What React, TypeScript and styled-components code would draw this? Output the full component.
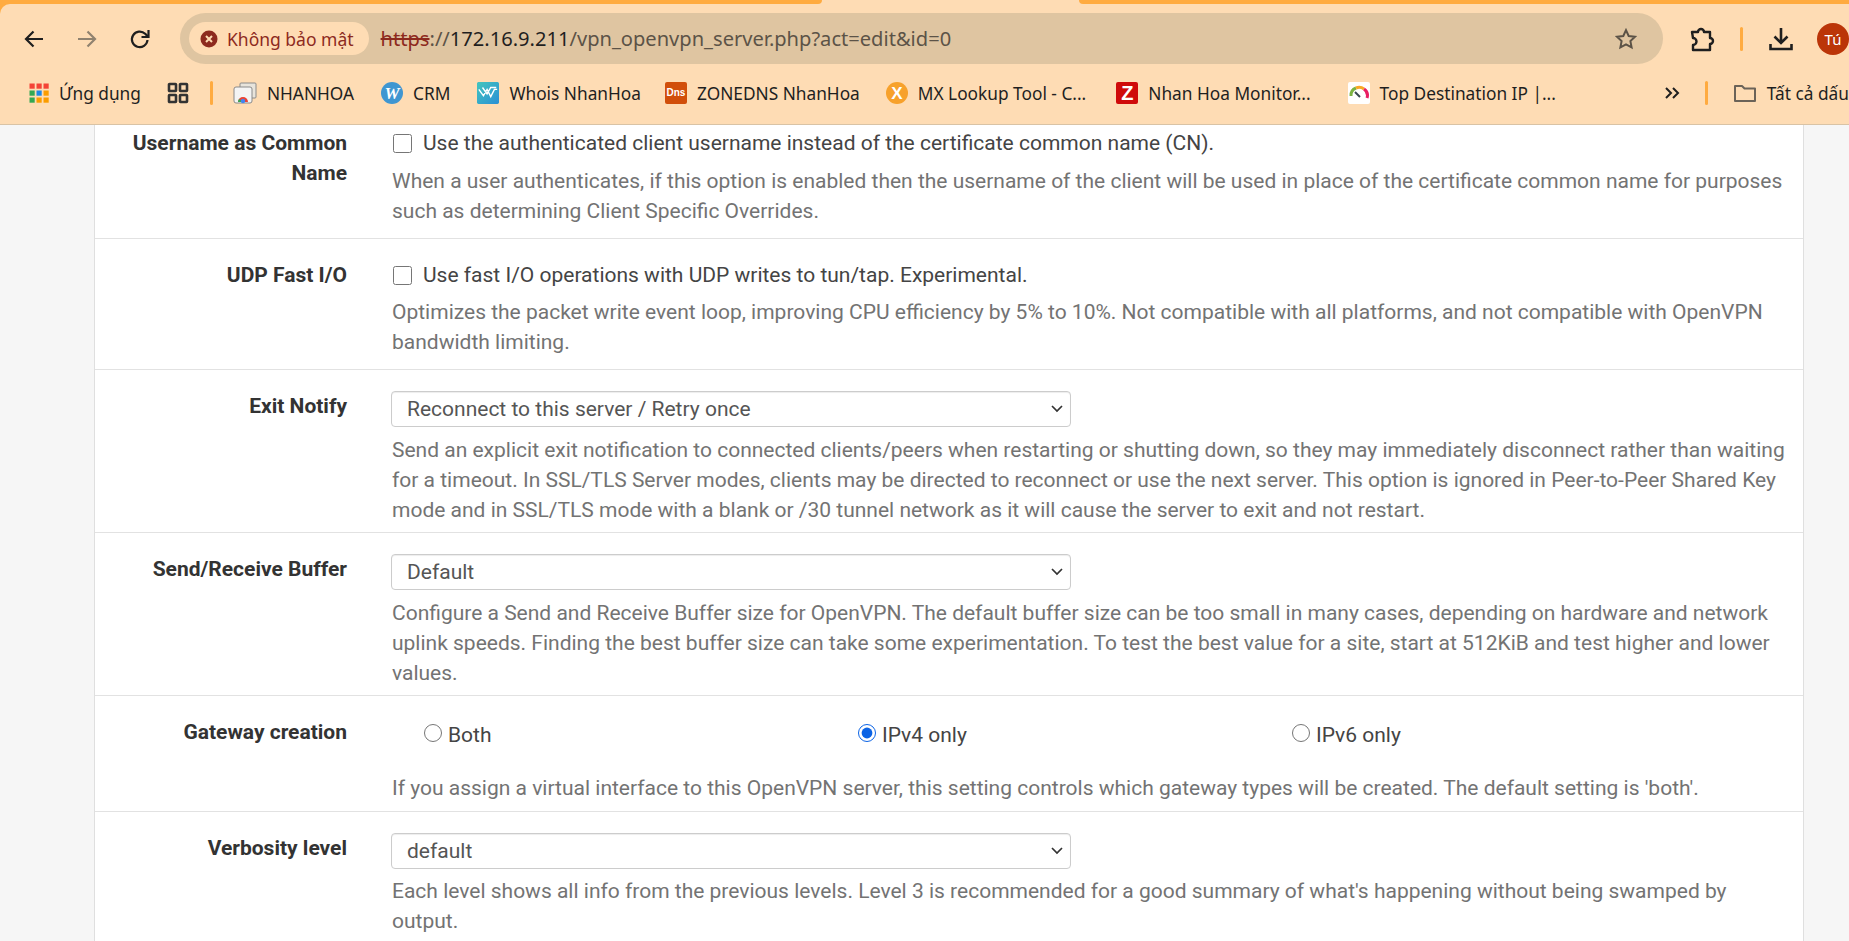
import React from 'react';
import styled, { createGlobalStyle } from 'styled-components';

const GlobalStyle = createGlobalStyle`
  html, body {
    margin: 0;
    padding: 0;
    height: 941px;
    overflow: hidden;
    background: #f6f6f6;
  }
  * { box-sizing: border-box; }
`;

const Window = styled.div`
  width: 1849px;
  height: 941px;
  display: flex;
  flex-direction: column;
  overflow: hidden;
  background: #ffab40;
`;

const TabStrip = styled.div`
  height: 4px;
  width: 100%;
  flex: none;
  display: flex;
  background: #fedcb4;
`;

const TabEdge = styled.div<{ $w?: number; $corner: string }>`
  background: #ffab40;
  height: 4px;
  ${({ $w }) => ($w ? `width: ${$w}px;` : 'flex: 1;')}
  border-${({ $corner }) => $corner}-radius: 4px;
`;

const TabGap = styled.div`
  width: 257px;
`;

const Chrome = styled.header`
  flex: none;
  height: 121px;
  background: #fedcb4;
  border-bottom: 1px solid #d9c3a5;
  border-top-left-radius: 10px;
  font-family: 'Noto Sans', 'Open Sans', sans-serif;
  overflow: hidden;
`;

const Toolbar = styled.div`
  height: 51px;
  margin-top: 9px;
  display: flex;
  align-items: center;
  padding-left: 21px;
`;

const NavButton = styled.button<{ $faded?: boolean }>`
  width: 26px;
  height: 26px;
  padding: 0;
  margin-right: 27px;
  border: 0;
  background: none;
  display: flex;
  align-items: center;
  justify-content: center;
  color: ${({ $faded }) => ($faded ? '#90826f' : '#1f1f1f')};
`;

const AddressBar = styled.div`
  width: 1483px;
  height: 51px;
  border-radius: 26px;
  background: #dfc5a1;
  display: flex;
  align-items: center;
  padding: 0 25px 0 9px;
`;

const SecurityChip = styled.div`
  height: 33px;
  padding: 0 15px 0 11px;
  border-radius: 17px;
  background: #fedcb4;
  color: #8d2a1e;
  display: flex;
  align-items: center;
  gap: 9px;
  font-size: 17.5px;
  white-space: nowrap;
`;

const Url = styled.div`
  margin-left: 12px;
  flex: 1;
  font-size: 20.1px;
  color: #5c5347;
  white-space: nowrap;
`;

const Scheme = styled.span`
  color: #8d2a1e;
  text-decoration: line-through;
`;

const Host = styled.span`
  color: #1f1f1f;
`;

const ToolIcons = styled.div`
  display: flex;
  align-items: center;
  flex: none;
`;

const ToolIcon = styled.div<{ $ml: number }>`
  margin-left: ${({ $ml }) => $ml}px;
  display: flex;
  color: #1f1f1f;
`;

const OrangeRule = styled.div<{ $ml: number }>`
  width: 3px;
  height: 24px;
  border-radius: 2px;
  background: #ffab40;
  flex: none;
  margin-left: ${({ $ml }) => $ml}px;
`;

const Avatar = styled.div`
  width: 32px;
  height: 32px;
  margin-left: 22px;
  flex: none;
  border-radius: 50%;
  background: #bb3508;
  color: #fff;
  font-size: 15px;
  display: flex;
  align-items: center;
  justify-content: center;
`;

const BookmarkBar = styled.div`
  height: 34px;
  margin-top: 12px;
  display: flex;
  align-items: center;
  padding-left: 28px;
  white-space: nowrap;
`;

const Bookmark = styled.div<{ $ml: number }>`
  display: flex;
  align-items: center;
  gap: 10px;
  margin-left: ${({ $ml }) => $ml}px;
  font-size: 17.3px;
  color: #1f1f1f;
`;

const Favicon = styled.div<{ $bg: string; $round?: boolean }>`
  width: 22px;
  height: 22px;
  flex: none;
  background: ${({ $bg }) => $bg};
  border-radius: ${({ $round }) => ($round ? '50%' : '2px')};
  color: #fff;
  display: flex;
  align-items: center;
  justify-content: center;
  font-weight: 700;
  overflow: hidden;
`;

const FaviconLetter = styled.span<{ $size: number; $serif?: boolean }>`
  font-size: ${({ $size }) => $size}px;
  line-height: 1;
  font-style: ${({ $serif }) => ($serif ? 'italic' : 'normal')};
  font-family: ${({ $serif }) => ($serif ? "'Liberation Serif', serif" : "'Liberation Sans', sans-serif")};
`;

const Page = styled.main`
  flex: 1;
  padding: 0 45px 0 94px;
  min-height: 0;
  background: #f6f6f6;
`;

const Panel = styled.section`
  background: #fff;
  border-left: 1px solid #dfdfdf;
  border-right: 1px solid #dfdfdf;
  font-family: Roboto, 'Liberation Sans', sans-serif;
  font-size: 21px;
  line-height: 30px;
`;

const Row = styled.div<{ $top?: number; $bottom?: number }>`
  display: grid;
  grid-template-columns: 252px 1fr;
  column-gap: 45px;
  padding: ${({ $top }) => $top ?? 21}px 17px ${({ $bottom }) => $bottom ?? 8}px 0;
  border-bottom: 1px solid #e2e2e2;
`;

const Label = styled.div`
  text-align: right;
  font-weight: 700;
  color: #333;
`;

const Field = styled.div`
  min-width: 0;
`;

const CheckLine = styled.label<{ $gap?: number }>`
  display: flex;
  align-items: center;
  gap: 11px;
  color: #444;
  margin-bottom: ${({ $gap }) => $gap ?? 7}px;
`;

const CheckBox = styled.input`
  width: 19px;
  height: 19px;
  margin: 1px 0 0 1px;
  flex: none;
`;

const Help = styled.p`
  margin: 0;
  color: #737373;
`;

const SelectBox = styled.select<{ $gap?: number }>`
  display: block;
  width: 680px;
  height: 36px;
  margin: 0 0 ${({ $gap }) => $gap ?? 7}px -1px;
  padding: 0 15px;
  appearance: none;
  border: 1px solid #ccc;
  border-radius: 4px;
  background: #fff url("data:image/svg+xml,%3Csvg xmlns='http://www.w3.org/2000/svg' width='12' height='8'%3E%3Cpath d='M1 1l5 5 5-5' fill='none' stroke='%23333' stroke-width='1.7'/%3E%3C/svg%3E") no-repeat right 7px center;
  box-shadow: inset 0 1px 1px rgba(0, 0, 0, 0.075);
  font: inherit;
  line-height: 34px;
  color: #555;
`;

const RadioGrid = styled.div`
  display: grid;
  grid-template-columns: repeat(3, 434px);
  padding-left: 32px;
  margin: 3px 0 23px;
`;

const RadioLine = styled.label`
  display: flex;
  align-items: center;
  gap: 6px;
  color: #444;
`;

const RadioDot = styled.input`
  width: 18px;
  height: 18px;
  margin: -5px 0 0 0;
  flex: none;
  accent-color: #0b63e5;
`;

const BackArrow = () => (
  <svg width="24" height="24" viewBox="0 0 24 24" fill="none" stroke="currentColor" strokeWidth="2.2">
    <path d="M21 12H4M11.5 4.5 4 12l7.5 7.5" />
  </svg>
);

const ForwardArrow = () => (
  <svg width="24" height="24" viewBox="0 0 24 24" fill="none" stroke="currentColor" strokeWidth="2.2">
    <path d="M3 12h17M12.5 4.5 20 12l-7.5 7.5" />
  </svg>
);

const ReloadIcon = () => (
  <svg width="24" height="24" viewBox="0 0 24 24" fill="none" stroke="currentColor" strokeWidth="2.2">
    <path d="M19.5 13a7.8 7.8 0 1 1-2.3-6.2l2.6 2.6" />
    <path d="M20.5 3v7h-7" />
  </svg>
);

const ErrorBadge = () => (
  <svg width="18" height="18" viewBox="0 0 18 18">
    <circle cx="9" cy="9" r="8.5" fill="#8d2a1e" />
    <path d="M6 6l6 6M12 6l-6 6" stroke="#fedcb4" strokeWidth="2" />
  </svg>
);

const StarIcon = () => (
  <svg width="24" height="24" viewBox="0 0 24 24" fill="none" stroke="#5c5347" strokeWidth="2">
    <path d="M12 3.2l2.7 5.8 6.3.8-4.6 4.3 1.2 6.3-5.6-3.1-5.6 3.1 1.2-6.3L3 9.8l6.3-.8z" />
  </svg>
);

const PuzzleIcon = () => (
  <svg width="28" height="28" viewBox="0 0 28 28" fill="none" stroke="currentColor" strokeWidth="2.4" strokeLinejoin="round">
    <path d="M4 7h6a3 3 0 0 1 6 0h6v6a3 3 0 0 1 0 6v6H5v-5a3.5 3.5 0 0 0 0-7z" />
  </svg>
);

const DownloadIcon = () => (
  <svg width="28" height="28" viewBox="0 0 28 28" fill="none" stroke="currentColor" strokeWidth="2.6">
    <path d="M14 3v15M7.5 11.5 14 18l6.5-6.5M3.5 19v5h21v-5" />
  </svg>
);

const AppsIcon = () => (
  <svg width="20" height="20" viewBox="0 0 20 20">
    {['#f44336', '#f44336', '#f44336', '#34a853', '#1e88e5', '#fb9d00', '#34a853', '#fb9d00', '#fb9d00'].map((c, i) => (
      <rect key={i} x={0.5 + (i % 3) * 7} y={0.5 + Math.floor(i / 3) * 7} width="5.2" height="5.2" fill={c} />
    ))}
  </svg>
);

const GridIcon = () => (
  <svg width="24" height="24" viewBox="0 0 24 24" fill="none" stroke="#333" strokeWidth="2.6">
    <rect x="3" y="3" width="7" height="7" rx="0.5" />
    <rect x="14" y="3" width="7" height="7" rx="0.5" />
    <rect x="3" y="14" width="7" height="7" rx="0.5" />
    <rect x="14" y="14" width="7" height="7" rx="0.5" />
  </svg>
);

const WindowsIcon = () => (
  <svg width="24" height="24" viewBox="0 0 24 24">
    <rect x="7" y="2" width="16" height="15" rx="1" fill="#e8e4dc" stroke="#8a8a8a" />
    <rect x="1" y="6" width="18" height="16" rx="2" fill="#f4f4f4" stroke="#8a8a8a" />
    <path d="M5 21a5 5 0 0 1 10 0z" fill="#ea4335" />
    <path d="M10 21l-5 0a5 5 0 0 1 1-3z" fill="#34a853" />
    <circle cx="10" cy="20" r="2.2" fill="#4285f4" />
  </svg>
);

const WhoisIcon = () => (
  <svg width="24" height="24" viewBox="0 0 24 24" fill="none" stroke="#fff" strokeWidth="1.5">
    <defs>
      <linearGradient id="whoisFill" x1="0" y1="0" x2="1" y2="1">
        <stop offset="0" stopColor="#43c6bd" />
        <stop offset="1" stopColor="#2a8fd6" />
      </linearGradient>
    </defs>
    <rect width="24" height="24" rx="2" fill="url(#whoisFill)" stroke="none" />
    <path d="M2 8l5 7 4-7 4 8 4-8h3M6 6l5 7 4-7h6" />
  </svg>
);

const GaugeIcon = () => (
  <svg width="22" height="22" viewBox="0 0 22 22" fill="none">
    <path d="M3 14a8 8 0 0 1 5-8" stroke="#7cb342" strokeWidth="3" />
    <path d="M8 6a8 8 0 0 1 8 1" stroke="#f9a825" strokeWidth="3" />
    <path d="M16 7a8 8 0 0 1 3 9" stroke="#e91e63" strokeWidth="3" />
    <path d="M7 10l5 5" stroke="#37474f" strokeWidth="2" />
  </svg>
);

const FolderIcon = () => (
  <svg width="24" height="24" viewBox="0 0 24 24" fill="none" stroke="#6b6358" strokeWidth="2">
    <path d="M2 5h7l2.5 2.5H22V20H2z" strokeLinejoin="round" />
  </svg>
);

const ChevronsIcon = () => (
  <svg width="16" height="16" viewBox="0 0 16 16" fill="none" stroke="#1f1f1f" strokeWidth="2">
    <path d="M2 3l5 5-5 5M9 3l5 5-5 5" />
  </svg>
);

export default function App() {
  return (
    <Window>
      <GlobalStyle />
      <TabStrip>
        <TabEdge $w={822} $corner="bottom-right" />
        <TabGap />
        <TabEdge $corner="bottom-left" />
      </TabStrip>
      <Chrome>
        <Toolbar>
          <NavButton aria-label="Back"><BackArrow /></NavButton>
          <NavButton $faded aria-label="Forward"><ForwardArrow /></NavButton>
          <NavButton aria-label="Reload"><ReloadIcon /></NavButton>
          <AddressBar>
            <SecurityChip><ErrorBadge />Không bảo mật</SecurityChip>
            <Url>
              <Scheme>https</Scheme>://<Host>172.16.9.211</Host>/vpn_openvpn_server.php?act=edit&amp;id=0
            </Url>
            <StarIcon />
          </AddressBar>
          <ToolIcons>
            <ToolIcon $ml={25}><PuzzleIcon /></ToolIcon>
            <OrangeRule $ml={24} />
            <ToolIcon $ml={24}><DownloadIcon /></ToolIcon>
            <Avatar>Tú</Avatar>
          </ToolIcons>
        </Toolbar>
        <BookmarkBar>
          <Bookmark $ml={1}><AppsIcon />Ứng dụng</Bookmark>
          <Bookmark $ml={25}><GridIcon /></Bookmark>
          <OrangeRule $ml={20} />
          <Bookmark $ml={20}><WindowsIcon />NHANHOA</Bookmark>
          <Bookmark $ml={27}><Favicon $bg="#3f96d1" $round><FaviconLetter $size={17} $serif>W</FaviconLetter></Favicon>CRM</Bookmark>
          <Bookmark $ml={27}><Favicon $bg="#3db5c4"><WhoisIcon /></Favicon>Whois NhanHoa</Bookmark>
          <Bookmark $ml={24}><Favicon $bg="#d14e0a"><FaviconLetter $size={10}>Dns</FaviconLetter></Favicon>ZONEDNS NhanHoa</Bookmark>
          <Bookmark $ml={26}><Favicon $bg="#f7a12b" $round><FaviconLetter $size={17}>X</FaviconLetter></Favicon>MX Lookup Tool - C...</Bookmark>
          <Bookmark $ml={30}><Favicon $bg="#cf0a0a"><FaviconLetter $size={20}>Z</FaviconLetter></Favicon>Nhan Hoa Monitor...</Bookmark>
          <Bookmark $ml={37}><Favicon $bg="#fff"><GaugeIcon /></Favicon>Top Destination IP |...</Bookmark>
          <Bookmark $ml={108}><ChevronsIcon /></Bookmark>
          <OrangeRule $ml={25} />
          <Bookmark $ml={25}><FolderIcon />Tất cả dấu</Bookmark>
        </BookmarkBar>
      </Chrome>
      <Page>
        <Panel>
          <Row $top={3} $bottom={12}>
            <Label>Username as Common Name</Label>
            <Field>
              <CheckLine $gap={8}><CheckBox type="checkbox" />Use the authenticated client username instead of the certificate common name (CN).</CheckLine>
              <Help>When a user authenticates, if this option is enabled then the username of the client will be used in place of the certificate common name for purposes such as determining Client Specific Overrides.</Help>
            </Field>
          </Row>
          <Row $bottom={12}>
            <Label>UDP Fast I/O</Label>
            <Field>
              <CheckLine><CheckBox type="checkbox" />Use fast I/O operations with UDP writes to tun/tap. Experimental.</CheckLine>
              <Help>Optimizes the packet write event loop, improving CPU efficiency by 5% to 10%. Not compatible with all platforms, and not compatible with OpenVPN bandwidth limiting.</Help>
            </Field>
          </Row>
          <Row $bottom={7}>
            <Label>Exit Notify</Label>
            <Field>
              <SelectBox $gap={8} defaultValue="retry">
                <option value="retry">Reconnect to this server / Retry once</option>
              </SelectBox>
              <Help>Send an explicit exit notification to connected clients/peers when restarting or shutting down, so they may immediately disconnect rather than waiting for a timeout. In SSL/TLS Server modes, clients may be directed to reconnect or use the next server. This option is ignored in Peer-to-Peer Shared Key mode and in SSL/TLS mode with a blank or /30 tunnel network as it will cause the server to exit and not restart.</Help>
            </Field>
          </Row>
          <Row $bottom={7}>
            <Label>Send/Receive Buffer</Label>
            <Field>
              <SelectBox $gap={8} defaultValue="default">
                <option value="default">Default</option>
              </SelectBox>
              <Help>Configure a Send and Receive Buffer size for OpenVPN. The default buffer size can be too small in many cases, depending on hardware and network uplink speeds. Finding the best buffer size can take some experimentation. To test the best value for a site, start at 512KiB and test higher and lower values.</Help>
            </Field>
          </Row>
          <Row>
            <Label>Gateway creation</Label>
            <Field>
              <RadioGrid>
                <RadioLine><RadioDot type="radio" name="gw" />Both</RadioLine>
                <RadioLine><RadioDot type="radio" name="gw" defaultChecked />IPv4 only</RadioLine>
                <RadioLine><RadioDot type="radio" name="gw" />IPv6 only</RadioLine>
              </RadioGrid>
              <Help>If you assign a virtual interface to this OpenVPN server, this setting controls which gateway types will be created. The default setting is 'both'.</Help>
            </Field>
          </Row>
          <Row>
            <Label>Verbosity level</Label>
            <Field>
              <SelectBox defaultValue="default">
                <option value="default">default</option>
              </SelectBox>
              <Help>Each level shows all info from the previous levels. Level 3 is recommended for a good summary of what's happening without being swamped by output.</Help>
            </Field>
          </Row>
        </Panel>
      </Page>
    </Window>
  );
}
